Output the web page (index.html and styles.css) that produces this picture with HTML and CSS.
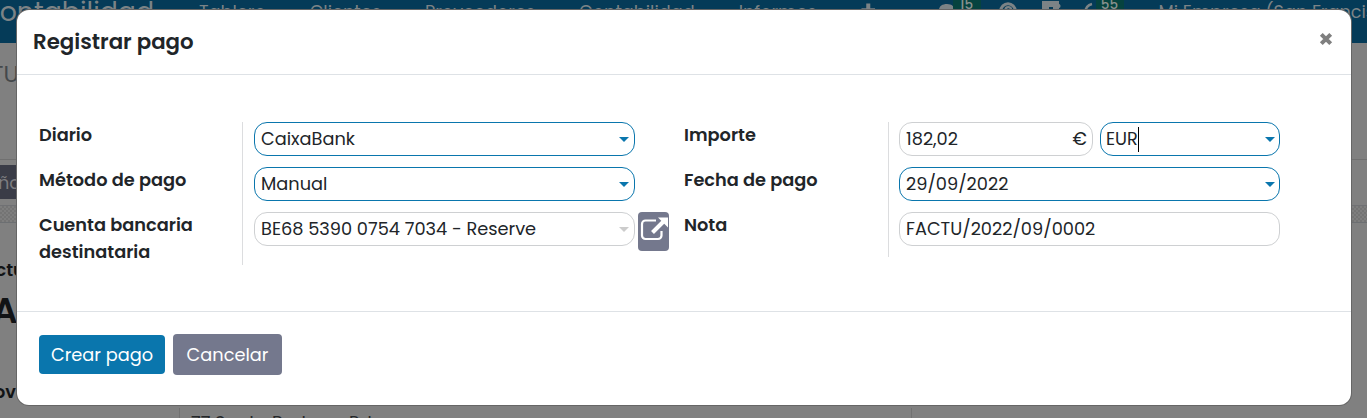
FILE: index.html
```
<!DOCTYPE html>
<html lang="es">
<head>
<meta charset="utf-8">
<title>Registrar pago</title>
<link rel="stylesheet" href="styles.css">
</head>
<body>
<div class="page">
  <nav class="navbar">
    <span class="brand">Contabilidad</span>
    <span class="nav-item">Tablero</span>
    <span class="nav-item">Clientes</span>
    <span class="nav-item">Proveedores</span>
    <span class="nav-item">Contabilidad</span>
    <span class="nav-item">Informes</span>
    <svg class="nav-icon plus" viewBox="0 0 16 20"><path d="M5.600 3h4.300v5H15v4H9.900v6H5.600v-6H.5V8h5.100z"/></svg>
    <svg class="nav-icon chat" viewBox="0 0 18 20"><path d="M9 4c4.800 0 8 3 8 6s-3 7-8 7-8-3-8-7 3.500-6 8-6z"/></svg>
    <span class="badge badge-chat">15</span>
    <svg class="nav-icon help" viewBox="0 0 18 20"><circle cx="9" cy="11" r="7.200" class="ring"/><path class="ring thin" d="M6.500 10c0-4 5.500-3.500 5.500-.5 0 2-3 2-3 4"/></svg>
    <svg class="nav-icon puzzle" viewBox="0 0 20 20"><path d="M1 1h17v3c2 0 2 4 0 4v10H1z"/><path class="hole" d="M8 7h4v5H8z"/></svg>
    <svg class="nav-icon clock" viewBox="0 0 16 20"><path class="ring thin" d="M9 4C5 5 2.500 8 2.500 12S6 18 10 17"/></svg>
    <span class="badge">55</span>
    <span class="nav-item company">Mi Empresa (San Francisco)</span>
  </nav>
  <div class="crumbs"><span class="crumb">TU</span></div>
  <div class="statusbar"><span class="status-btn">Añadir</span></div>
  <div class="sheet-gap"></div>
  <div class="sheet">
    <div class="sheet-kind">Factura</div>
    <div class="sheet-title">FA</div>
    <div class="sheet-partner">Proveedor</div>
    <div class="sheet-address"><div class="address">77 Santa Barbara Rd</div></div>
  </div>
</div>

<section class="dialog">
  <header class="dialog-head">
    <h4 class="dialog-title">Registrar pago</h4>
    <svg class="close" viewBox="0 0 14 14"><path d="M2.300 2.300l9.400 9.400M11.700 2.300l-9.400 9.400"/></svg>
  </header>
  <div class="dialog-body">
    <div class="group group-left">
      <div class="labels">
        <label>Diario</label>
        <label>Método de pago</label>
        <label>Cuenta bancaria destinataria</label>
      </div>
      <div class="fields">
        <div class="field active"><span>CaixaBank</span><i class="caret"></i></div>
        <div class="field active"><span>Manual</span><i class="caret"></i></div>
        <div class="field-row">
          <div class="field"><span>BE68 5390 0754 7034 - Reserve</span><i class="caret"></i></div>
          <span class="open-btn"><svg viewBox="0 0 31 39"><path class="frame" d="M18 8.500H7.500a3.500 3.500 0 0 0-3.500 3.500V23.500a3.500 3.500 0 0 0 3.500 3.500h12.500a3.500 3.500 0 0 0 3.500-3.500v-4.500"/><path class="shaft" d="M14.500 20.500L25.500 9.500"/><path class="tip" d="M20 5.500H30v10z"/></svg></span>
        </div>
      </div>
    </div>
    <div class="group group-right">
      <div class="labels">
        <label>Importe</label>
        <label>Fecha de pago</label>
        <label>Nota</label>
      </div>
      <div class="fields">
        <div class="field-row amount-row">
          <div class="field amount"><span>182,02</span><span class="euro">€</span></div>
          <div class="field active currency"><span>EUR</span><i class="cursor"></i><i class="caret"></i></div>
        </div>
        <div class="field active"><span>29/09/2022</span><i class="caret"></i></div>
        <div class="field"><span>FACTU/2022/09/0002</span></div>
      </div>
    </div>
  </div>
  <footer class="dialog-foot">
    <button class="btn btn-primary">Crear pago</button>
    <button class="btn btn-secondary">Cancelar</button>
  </footer>
</section>
</body>
</html>
```
FILE: styles.css
```
* { box-sizing: border-box; }
body {
  margin: 0;
  height: 418px;
  overflow: hidden;
  background: #808080;
  color: #212529;
  font-family: Poppins, Inter, sans-serif;
  font-size: 17.75px;
  line-height: 27px;
}

/* page behind the dialog */
.page { height: 418px; overflow: hidden; }
.navbar {
  height: 43px;
  display: flex;
  align-items: flex-start;
  background: #053b58;
  color: #7c8386;
  white-space: nowrap;
  overflow: hidden;
}
.brand { width: 220px; flex: none; margin-left: -21px; font-size: 26.8px; line-height: 24px; }
.nav-item { margin-right: 44px; line-height: 24px; font-size: 17.7px; }
.nav-icon { width: 16px; height: 20px; flex: none; fill: #7c8386; }
.plus { width: 15px; }
.chat { width: 18px; margin-left: 62px; }
.ring { fill: none; stroke: #7c8386; stroke-width: 3; }
.thin { stroke-width: 2.400; }
.hole { fill: #053b58; }
.badge {
  width: 28px;
  height: 16px;
  flex: none;
  margin-left: -3px;
  margin-top: -4px;
  background: #06433f;
  font-size: 13.500px;
  font-weight: 500;
  line-height: 17px;
  text-align: center;
  border-radius: 4px;
  color: #8a9290;
}
.badge-chat { margin-right: 18px; }
.help { width: 18px; }
.puzzle { width: 20px; margin: 0 22px 0 24px; }
.company { margin-left: 35px; margin-right: 0; }

.crumbs { height: 117px; padding-top: 18px; border-bottom: 1px solid #707070; }
.crumb { display: block; margin-left: -9px; font-size: 23px; color: #44484b; }
.statusbar { height: 45px; padding-top: 5px; }
.status-btn {
  display: flex;
  width: 68px;
  height: 34px;
  margin-left: -28px;
  padding-left: 14px;
  align-items: center;
  background: #3a3c47;
  color: #7d7d80;
}
.sheet-gap {
  height: 18px;
  border-top: 1px solid #707174;
  border-bottom: 1px solid #6c6f72;
  background: repeating-conic-gradient(#747474 0 25%, #7e7e7e 0 50%) 0 0 / 4px 4px;
}
.sheet { color: #111315; }
.sheet-kind { height: 62px; padding-top: 33px; margin-left: -26px; font-weight: 600; }
.sheet-title { height: 94px; margin-left: -26px; font-size: 35px; line-height: 52px; font-weight: 600; }
.sheet-partner { height: 29px; margin-left: -24px; font-weight: 600; line-height: 26px; }
.sheet-address { width: 733px; height: 40px; margin-left: 179px; border-left: 1px solid #717171; border-right: 1px solid #717171; }
.address { padding: 0 11px; line-height: 29px; color: #25282a; }

/* dialog */
.dialog {
  position: absolute;
  left: 17px;
  top: 10px;
  width: 1334px;
  height: 395px;
  display: flex;
  flex-direction: column;
  background: #fff;
  border-radius: 12px;
  box-shadow: 0 0 0 1px #666;
}
.dialog-head {
  height: 65px;
  padding: 0 18px 2px 16px;
  display: flex;
  align-items: center;
  justify-content: space-between;
  border-bottom: 1px solid #dee2e6;
}
.dialog-title { margin: 0; font-size: 21.3px; font-weight: 600; }
.close { width: 14px; height: 14px; margin-bottom: 4px; fill: none; stroke: #7f7f7f; stroke-width: 4; }
.dialog-body { height: 236px; padding: 47px 22px 0; display: flex; }
.group { display: flex; align-items: flex-start; }
.group-left { width: 645px; }
.labels {
  width: 204px;
  height: 143px;
  padding-right: 40px;
  display: grid;
  grid-template-rows: 44px 45px 54px;
  align-items: start;
  border-right: 1px solid #dcdddf;
  font-weight: 600;
}
.labels label { margin-top: -1px; }
.labels label + label { margin-top: 0; }
.group-right .labels { width: 205px; height: 135px; grid-template-rows: 44px 45px 46px; }
.fields { display: grid; grid-auto-rows: 34px; gap: 11px; margin-left: 11px; width: 381px; }
.group-right .fields { margin-left: 10px; }
.field {
  width: 381px;
  height: 34px;
  padding: 0 5px 0 6px;
  display: flex;
  align-items: center;
  flex: none;
  border: 1px solid #ced0d2;
  border-radius: 13px;
  white-space: nowrap;
}
.field span { padding-bottom: 2px; }
.active { border-color: #0a76ad; }
.caret { margin-left: auto; border: 5px solid transparent; border-top-color: #ccc; border-bottom: 0; }
.group-right .caret { margin-right: -1px; }
.active .caret { border-top-color: #0a76ad; }
.field-row { display: flex; gap: 3px; align-items: flex-start; }
.amount-row { gap: 7px; }
.amount { width: 194px; }
.currency { width: 180px; padding-left: 5px; }
.euro { margin-left: auto; }
.cursor { width: 1px; height: 25px; background: #000; }
.open-btn { width: 31px; height: 39px; flex: none; border-radius: 4px; background: #74788d; }
.open-btn svg { display: block; width: 31px; height: 39px; fill: none; stroke: #fff; }
.frame { stroke-width: 2.200; }
.shaft { stroke-width: 4; }
.tip { fill: #fff; stroke: none; }
.dialog-foot {
  flex: 1;
  padding: 0 22px 8px;
  display: flex;
  align-items: center;
  gap: 8px;
  border-top: 1px solid #dee2e6;
}
.btn {
  height: 39px;
  width: 126px;
  padding: 0 0 1px;
  border: 0;
  border-radius: 4px;
  color: #fff;
  font: inherit;
}
.btn-primary { background: #0a76ad; }
.btn-secondary { width: 109px; height: 41px; background: #74788d; }
```
